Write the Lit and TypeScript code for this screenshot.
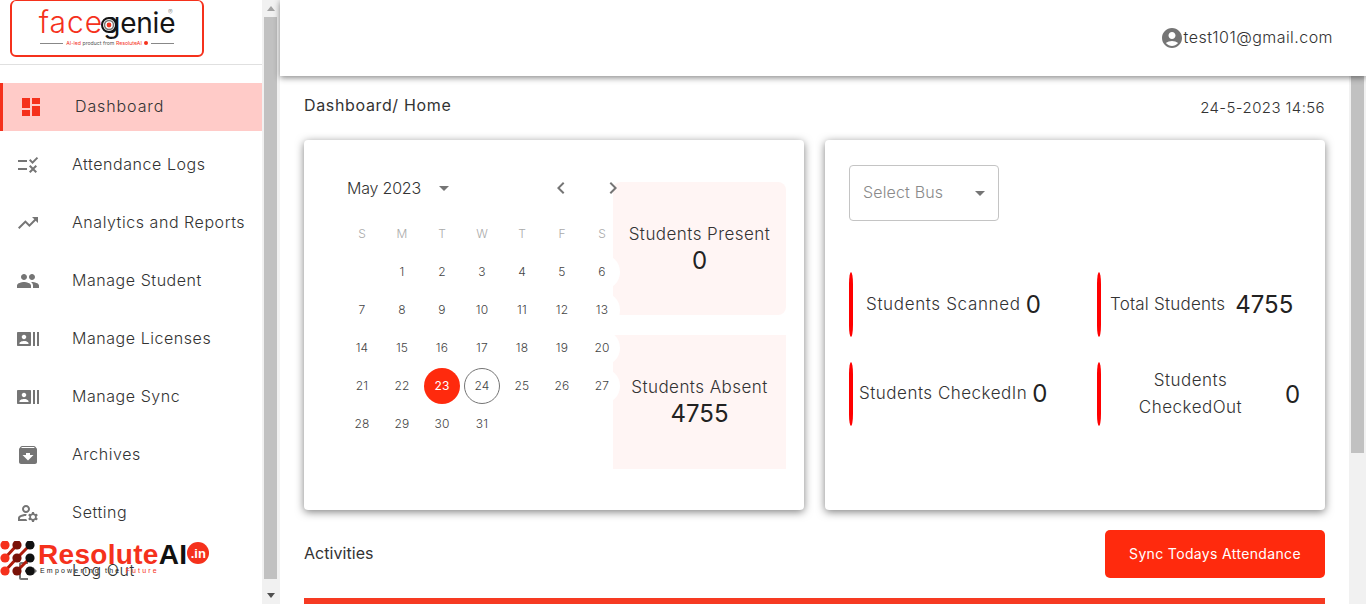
import { LitElement, html, css, svg } from "lit";
import { customElement } from "lit/decorators.js";

const icons: Record<string, string> = {
  dashboard: "M3 13h8V3H3v10zm0 8h8v-6H3v6zm10 0h8V11h-8v10zm0-18v6h8V3h-8z",
  rule: "M16.54 11 13 7.46l1.41-1.41 2.12 2.12 4.24-4.24 1.41 1.41L16.54 11zM11 7H2v2h9V7zm10 6.41L19.59 12 17 14.59 14.41 12 13 13.41 15.59 16 13 18.59 14.41 20 17 17.41 19.59 20 21 18.59 18.41 16 21 13.41zM11 15H2v2h9v-2z",
  trending: "M16 6l2.29 2.29-4.88 4.88-4-4L2 16.59 3.41 18l6-6 4 4 6.3-6.29L22 12V6z",
  people: "M16 11c1.66 0 2.99-1.34 2.99-3S17.66 5 16 5c-1.66 0-3 1.34-3 3s1.34 3 3 3zm-8 0c1.66 0 2.99-1.34 2.99-3S9.66 5 8 5C6.34 5 5 6.34 5 8s1.34 3 3 3zm0 2c-2.33 0-7 1.17-7 3.5V19h14v-2.5c0-2.33-4.67-3.5-7-3.5zm8 0c-.29 0-.62.02-.97.05 1.16.84 1.97 1.97 1.97 3.45V19h6v-2.5c0-2.33-4.67-3.5-7-3.5z",
  actors: "M21 5v14h2V5h-2zm-4 14h2V5h-2v14zM14 5H2c-.55 0-1 .45-1 1v12c0 .55.45 1 1 1h12c.55 0 1-.45 1-1V6c0-.55-.45-1-1-1zM8 7.75c1.24 0 2.25 1.01 2.25 2.25S9.24 12.25 8 12.25 5.75 11.24 5.75 10 6.76 7.75 8 7.75zM12.5 17h-9v-.75c0-1.5 3-2.25 4.5-2.25s4.5.75 4.5 2.25V17z",
  archive: "M20.54 5.23l-1.39-1.68C18.88 3.21 18.47 3 18 3H6c-.47 0-.88.21-1.16.55L3.46 5.23C3.17 5.57 3 6.02 3 6.5V19c0 1.1.9 2 2 2h14c1.1 0 2-.9 2-2V6.5c0-.48-.17-.93-.46-1.27zM12 17.5 6.5 12H10v-2h4v2h3.5L12 17.5zM5.12 5l.81-1h12l.94 1H5.12z",
  settings: "M4 18v-.65c0-.34.16-.66.41-.81C6.1 15.53 8.03 15 10 15c.03 0 .05 0 .08.01.1-.7.3-1.37.59-1.98-.22-.02-.44-.03-.67-.03-2.42 0-4.68.67-6.61 1.82-.88.52-1.39 1.5-1.39 2.53V20h9.26c-.42-.6-.75-1.28-.97-2H4zM10 12c2.21 0 4-1.79 4-4s-1.79-4-4-4-4 1.79-4 4 1.79 4 4 4zm0-6c1.1 0 2 .9 2 2s-.9 2-2 2-2-.9-2-2 .9-2 2-2zM20.75 16c0-.22-.03-.42-.06-.63l1.14-1.01-1-1.73-1.45.49c-.32-.27-.68-.48-1.08-.63L18 11h-2l-.3 1.49c-.4.15-.76.36-1.08.63l-1.45-.49-1 1.73 1.14 1.01c-.03.21-.06.41-.06.63s.03.42.06.63l-1.14 1.01 1 1.73 1.45-.49c.32.27.68.48 1.08.63L16 21h2l.3-1.49c.4-.15.76-.36 1.08-.63l1.45.49 1-1.73-1.14-1.01c.03-.21.06-.41.06-.63zM17 18c-1.1 0-2-.9-2-2s.9-2 2-2 2 .9 2 2-.9 2-2 2z",
  logout: "M5 5h7V3H5c-1.1 0-2 .9-2 2v14c0 1.1.9 2 2 2h7v-2H5V5zm16 7-4-4v3H9v2h8v3l4-4z",
  account: "M12 2C6.48 2 2 6.48 2 12s4.48 10 10 10 10-4.48 10-10S17.52 2 12 2zm0 4c1.93 0 3.5 1.57 3.5 3.5S13.93 13 12 13s-3.5-1.57-3.5-3.5S10.07 6 12 6zm0 14c-2.03 0-4.43-.82-6.14-2.88C7.55 15.8 9.68 15 12 15s4.45.8 6.14 2.12C16.43 19.18 14.03 20 12 20z",
  left: "M15.41 7.41 14 6l-6 6 6 6 1.41-1.41L10.83 12z",
  right: "M10 6 8.59 7.41 13.17 12l-4.58 4.59L10 18l6-6z",
  drop: "M7 10l5 5 5-5z",
};

const icon = (name: string, cls = "") =>
  html`<svg class="icon ${cls}" viewBox="0 0 24 24"><path d=${icons[name]}></path></svg>`;

const navItems = [
  ["dashboard", "Dashboard"],
  ["rule", "Attendance Logs"],
  ["trending", "Analytics and Reports"],
  ["people", "Manage Student"],
  ["actors", "Manage Licenses"],
  ["actors", "Manage Sync"],
  ["archive", "Archives"],
  ["settings", "Setting"],
  ["logout", "Log Out"],
];

const weekdays = ["S", "M", "T", "W", "T", "F", "S"];

@customElement("app-root")
export class AppRoot extends LitElement {
  static styles = css`
    :host {
      display: block;
      height: 604px;
      overflow: hidden;
      font-family: Inter, "Open Sans", sans-serif;
      font-weight: 300;
      color: #333;
      background: #fff;
    }

    .page {
      display: flex;
      height: 604px;
    }

    .icon {
      width: 24px;
      height: 24px;
      flex: none;
      fill: #757575;
      display: block;
    }

    /* sidebar */
    .sidebar {
      width: 280px;
      flex: none;
      display: flex;
      position: relative;
    }

    .side-main {
      width: 262px;
      flex: none;
    }

    .logo-wrap {
      height: 64px;
      border-bottom: 1px solid #e0e0e0;
      margin-bottom: 18px;
      padding-left: 10px;
    }

    .logo {
      width: 194px;
      height: 57px;
      box-sizing: border-box;
      border: 2px solid #f5311c;
      border-top-width: 1px;
      border-radius: 6px;
      display: flex;
      flex-direction: column;
      align-items: center;
      padding-top: 5px;
      position: relative;
    }

    .logo-name {
      font-size: 30px;
      line-height: 32px;
      letter-spacing: 1px;
      color: #f5311c;
      font-weight: 300;
      white-space: nowrap;
    }

    .logo-name b {
      font-size: 28px;
      font-weight: 400;
      color: #151515;
      letter-spacing: -0.2px;
    }

    .bullseye {
      position: absolute;
      left: 89px;
      top: 16px;
      width: 16px;
      height: 16px;
    }

    .reg {
      position: absolute;
      left: 156px;
      top: 8px;
      font-size: 7px;
      line-height: 8px;
      color: #888;
    }

    .logo-sub {
      display: flex;
      align-items: center;
      gap: 3px;
      font-size: 5.2px;
      font-weight: 400;
      color: #555;
      line-height: 6px;
      white-space: nowrap;
      margin-top: 1px;
    }

    .logo-sub i {
      width: 23px;
      height: 1px;
      background: #888;
    }

    .logo-sub span {
      color: #f5311c;
    }

    .logo-sub em {
      display: inline-block;
      width: 4px;
      height: 4px;
      border-radius: 50%;
      background: #f5311c;
      margin-left: 2px;
    }

    .nav-item {
      height: 48px;
      margin-bottom: 10px;
      display: flex;
      align-items: center;
      gap: 32px;
      padding-left: 16px;
      font-size: 16px;
      letter-spacing: 0.55px;
      white-space: nowrap;
    }

    .nav-item span {
      margin-bottom: 2px;
    }

    .nav-item.active {
      border-left: 3px solid #f5311c;
      background: #ffcbc8;
      letter-spacing: 0.9px;
    }

    .nav-item.active .icon {
      fill: #f5311c;
    }

    .scrollbar {
      width: 18px;
      flex: none;
      box-sizing: border-box;
      background: #f1f1f1;
      display: flex;
      flex-direction: column;
      align-items: center;
      padding: 0 3px 0 2px;
    }

    .sb-btn {
      height: 17px;
      flex: none;
      display: flex;
      align-items: center;
      justify-content: center;
    }

    .sb-up {
      border: 4px solid transparent;
      border-top: 0;
      border-bottom: 5px solid #a3a3a3;
    }

    .sb-down {
      border: 4px solid transparent;
      border-bottom: 0;
      border-top: 5px solid #505050;
    }

    .thumb {
      width: 100%;
      background: #c1c1c1;
      flex: none;
    }

    .side-thumb {
      height: 562px;
    }

    .sb-fill {
      flex: 1;
    }

    .resolute {
      position: absolute;
      left: 0;
      top: 541px;
      display: flex;
      align-items: flex-start;
    }

    .res-dots {
      width: 38px;
      height: 36px;
      flex: none;
    }

    .res-name {
      font-family: "Liberation Sans", sans-serif;
      font-weight: 700;
      font-size: 28px;
      line-height: 27px;
      letter-spacing: 0.3px;
      color: #f5311c;
      white-space: nowrap;
    }

    .res-name b {
      color: #111;
    }

    .res-tag {
      font-family: "Liberation Sans", sans-serif;
      font-weight: 400;
      font-size: 7px;
      line-height: 8px;
      letter-spacing: 2.2px;
      color: #222;
      white-space: nowrap;
      margin-left: 2px;
      margin-top: -1px;
    }

    .res-tag span {
      color: #f5311c;
    }

    .res-in {
      width: 22px;
      height: 22px;
      border-radius: 50%;
      background: #f5311c;
      color: #fff;
      font-family: "Liberation Sans", sans-serif;
      font-weight: 700;
      font-size: 13px;
      line-height: 23px;
      text-align: center;
      margin-top: 1px;
    }

    /* main */
    .main {
      flex: 1;
      min-width: 0;
      display: flex;
      flex-direction: column;
    }

    .topbar {
      height: 76px;
      flex: none;
      display: flex;
      justify-content: flex-end;
      align-items: center;
      padding-right: 33px;
      background: #fff;
      box-shadow: 0 2px 6px rgba(0, 0, 0, 0.45);
      position: relative;
      z-index: 2;
      font-size: 16px;
      letter-spacing: 0.45px;
    }

    .topbar span {
      margin-bottom: 2px;
    }

    .body {
      flex: 1;
      min-height: 0;
      display: flex;
    }

    .content {
      flex: 1;
      min-width: 0;
      padding: 0 24px;
    }

    .main-scroll {
      width: 17px;
      padding: 0 2px;
      flex: none;
      box-sizing: border-box;
      background: #f1f1f1;
    }

    .main-thumb {
      height: 377px;
    }

    .crumb-row {
      height: 64px;
      display: flex;
      justify-content: space-between;
      align-items: flex-start;
    }

    .crumb {
      font-size: 16px;
      font-weight: 400;
      letter-spacing: 0.65px;
      line-height: 24px;
      margin-top: 17px;
    }

    .stamp {
      font-size: 15px;
      letter-spacing: 0.4px;
      line-height: 22px;
      margin-top: 21px;
    }

    .cards {
      display: grid;
      grid-template-columns: 500px 500px;
      gap: 21px;
    }

    .card {
      height: 370px;
      box-sizing: border-box;
      background: #fff;
      border-radius: 4px;
      box-shadow: 0 2px 8px rgba(0, 0, 0, 0.5);
    }

    .cal-card {
      display: flex;
      padding: 42px 18px 0 38px;
    }

    .calendar {
      width: 271px;
      flex: none;
      position: relative;
      z-index: 1;
    }

    .cal-head {
      width: 300px;
      height: 12px;
      display: flex;
      align-items: center;
      font-size: 16px;
      letter-spacing: -0.2px;
      margin-left: 5px;
      margin-bottom: 31px;
      white-space: nowrap;
    }

    .cal-head .month {
      width: 82px;
      flex: none;
    }

    .cal-head .drop {
      margin-left: 3px;
      margin-right: 93px;
    }

    .cal-head .next {
      margin-left: 28px;
    }

    .grid {
      display: grid;
      grid-template-columns: repeat(7, 40px);
      width: 280px;
      text-align: center;
    }

    .wd {
      font-size: 12px;
      font-weight: 300;
      line-height: 18px;
      color: #aaa;
      height: 20px;
    }

    .wd-row {
      margin-bottom: 8px;
    }

    .days {
      grid-auto-rows: 38px;
    }

    .day {
      width: 36px;
      height: 36px;
      box-sizing: border-box;
      margin: 1px 2px;
      border-radius: 50%;
      background: #fff;
      font-size: 12px;
      line-height: 35px;
      letter-spacing: 0.2px;
      color: #444;
    }

    .day.blank {
      background: transparent;
    }

    .day.selected {
      background: #ff2a0d;
      color: #fff;
      font-weight: 400;
    }

    .day.today {
      border: 1px solid #757575;
      line-height: 33px;
    }

    .tiles {
      flex: 1;
      display: flex;
      flex-direction: column;
      gap: 20px;
    }

    .tile {
      height: 133px;
      box-sizing: border-box;
      padding-top: 2px;
      border-radius: 8px;
      background: #fff5f4;
      display: flex;
      flex-direction: column;
      align-items: center;
      justify-content: center;
      font-size: 17px;
      letter-spacing: 0.45px;
      white-space: nowrap;
    }

    .tile strong {
      font-weight: 400;
      font-size: 24px;
      line-height: 30px;
      margin-top: 2px;
      color: #222;
      letter-spacing: 0;
    }

    .tile.absent {
      height: 134px;
      border-radius: 0;
    }

    .stats-card {
      padding: 25px 24px;
    }

    .select {
      width: 150px;
      height: 56px;
      box-sizing: border-box;
      border: 1px solid #c4c4c4;
      border-radius: 4px;
      display: flex;
      align-items: center;
      justify-content: space-between;
      padding: 0 6px 0 13px;
      color: #8a8a8a;
      font-size: 16px;
      letter-spacing: 0.15px;
    }

    .select span {
      margin-bottom: 2px;
    }

    .stat-grid {
      display: grid;
      grid-template-columns: 248px 228px;
      grid-template-rows: 65px 64px;
      row-gap: 25px;
      margin-top: 51px;
    }

    .stat {
      display: flex;
      align-items: center;
      font-size: 17px;
    }

    .stat::before {
      content: "";
      width: 4px;
      align-self: stretch;
      flex: none;
      background: #f00;
      border-radius: 2px / 12px;
    }

    .stat .label {
      text-align: center;
      line-height: 27px;
    }

    .stat strong {
      font-weight: 400;
      font-size: 24px;
      color: #222;
      letter-spacing: 0;
      margin-left: 5px;
    }

    .s1 {
      letter-spacing: 0.65px;
    }

    .s1::before {
      margin-right: 13px;
    }

    .s2 {
      letter-spacing: 0.2px;
    }

    .s2::before {
      margin-right: 9px;
    }

    .s2 strong {
      margin-left: 10px;
    }

    .s3 {
      letter-spacing: 0.5px;
    }

    .s3::before {
      margin-right: 6px;
    }

    .s3 .label,
    .s3 strong {
      margin-bottom: 2px;
    }

    .s4 {
      letter-spacing: 0.5px;
    }

    .s4 .label {
      width: 179px;
    }

    .activity-row {
      height: 48px;
      margin-top: 20px;
      margin-bottom: 20px;
      display: flex;
      justify-content: space-between;
      align-items: center;
    }

    .activity-row span {
      font-size: 16px;
      font-weight: 400;
      letter-spacing: 0.05px;
      margin-bottom: 2px;
    }

    .sync {
      width: 220px;
      height: 48px;
      padding: 0 0 2px;
      border: none;
      border-radius: 5px;
      background: #ff2a0d;
      color: #fff;
      font-family: inherit;
      font-size: 14px;
      font-weight: 400;
      letter-spacing: 0.35px;
    }

    .table-top {
      height: 6px;
      background: #f63a22;
    }
  `;

  renderLogo() {
    return html`
      <div class="logo">
        <div class="logo-name">face<b>genie</b></div>
        <svg class="bullseye" viewBox="0 0 16 16">
          <circle cx="8" cy="8" r="7" fill="#fff" stroke="#151515" stroke-width="2"></circle>
          <circle cx="8" cy="8" r="4.5" fill="#fff" stroke="#777" stroke-width="1.5"></circle>
          <circle cx="8" cy="8" r="2.4" fill="#f5311c"></circle>
        </svg>
        <span class="reg">®</span>
        <div class="logo-sub">
          <i></i><div><span>AI-led</span> product from <span>ResoluteAI</span><em></em></div><i></i>
        </div>
      </div>
    `;
  }

  renderDots() {
    const xs = [5, 17, 30];
    const ys = [4, 17, 30];
    const fill = ["#f5311c", "#7a1208", "#111"];
    return html`
      <svg class="res-dots" viewBox="0 0 38 36">
        ${svg`
          <path d="M5 17 17 4M5 30 17 17M17 17 30 4M17 30 30 17" stroke="#b01c0c" stroke-width="3" fill="none"></path>
          ${ys.map((y) =>
            xs.map((x, i) => svg`<circle cx=${x} cy=${y} r="4.6" fill=${fill[i]}></circle>`)
          )}
        `}
      </svg>
    `;
  }

  render() {
    const blanks = [0];
    const days = Array.from({ length: 31 }, (_, i) => i + 1);
    return html`
      <div class="page">
        <aside class="sidebar">
          <div class="side-main">
            <div class="logo-wrap">${this.renderLogo()}</div>
            ${navItems.map(
              ([ic, label], i) => html`
                <div class="nav-item ${i === 0 ? "active" : ""}">${icon(ic)}<span>${label}</span></div>
              `
            )}
          </div>
          <div class="scrollbar">
            <div class="sb-btn"><div class="sb-up"></div></div>
            <div class="thumb side-thumb"></div>
            <div class="sb-fill"></div>
            <div class="sb-btn"><div class="sb-down"></div></div>
          </div>
          <div class="resolute">
            ${this.renderDots()}
            <div>
              <div class="res-name">Resolute<b>AI</b></div>
              <div class="res-tag">Empowering the <span>Future</span></div>
            </div>
            <div class="res-in">.in</div>
          </div>
        </aside>

        <div class="main">
          <header class="topbar">${icon("account")}<span>test101@gmail.com</span></header>
          <div class="body">
            <div class="content">
              <div class="crumb-row">
                <div class="crumb">Dashboard/ Home</div>
                <div class="stamp">24-5-2023 14:56</div>
              </div>
              <div class="cards">
                <section class="card cal-card">
                  <div class="calendar">
                    <div class="cal-head">
                      <span class="month">May 2023</span>
                      ${icon("drop", "drop")}${icon("left")}${icon("right", "next")}
                    </div>
                    <div class="grid wd-row">
                      ${weekdays.map((d) => html`<div class="wd">${d}</div>`)}
                    </div>
                    <div class="grid days">
                      ${blanks.map(() => html`<div class="day blank"></div>`)}
                      ${days.map(
                        (d) => html`<div class="day ${d === 23 ? "selected" : ""} ${d === 24 ? "today" : ""}">${d}</div>`
                      )}
                    </div>
                  </div>
                  <div class="tiles">
                    <div class="tile">Students Present<strong>0</strong></div>
                    <div class="tile absent">Students Absent<strong>4755</strong></div>
                  </div>
                </section>
                <section class="card stats-card">
                  <div class="select"><span>Select Bus</span>${icon("drop")}</div>
                  <div class="stat-grid">
                    <div class="stat s1"><span class="label">Students Scanned</span><strong>0</strong></div>
                    <div class="stat s2"><span class="label">Total Students</span><strong>4755</strong></div>
                    <div class="stat s3"><span class="label">Students CheckedIn</span><strong>0</strong></div>
                    <div class="stat s4"><span class="label">Students<br />CheckedOut</span><strong>0</strong></div>
                  </div>
                </section>
              </div>
              <div class="activity-row">
                <span>Activities</span>
                <button class="sync">Sync Todays Attendance</button>
              </div>
              <div class="table-top"></div>
            </div>
            <div class="main-scroll"><div class="thumb main-thumb"></div></div>
          </div>
        </div>
      </div>
    `;
  }
}
